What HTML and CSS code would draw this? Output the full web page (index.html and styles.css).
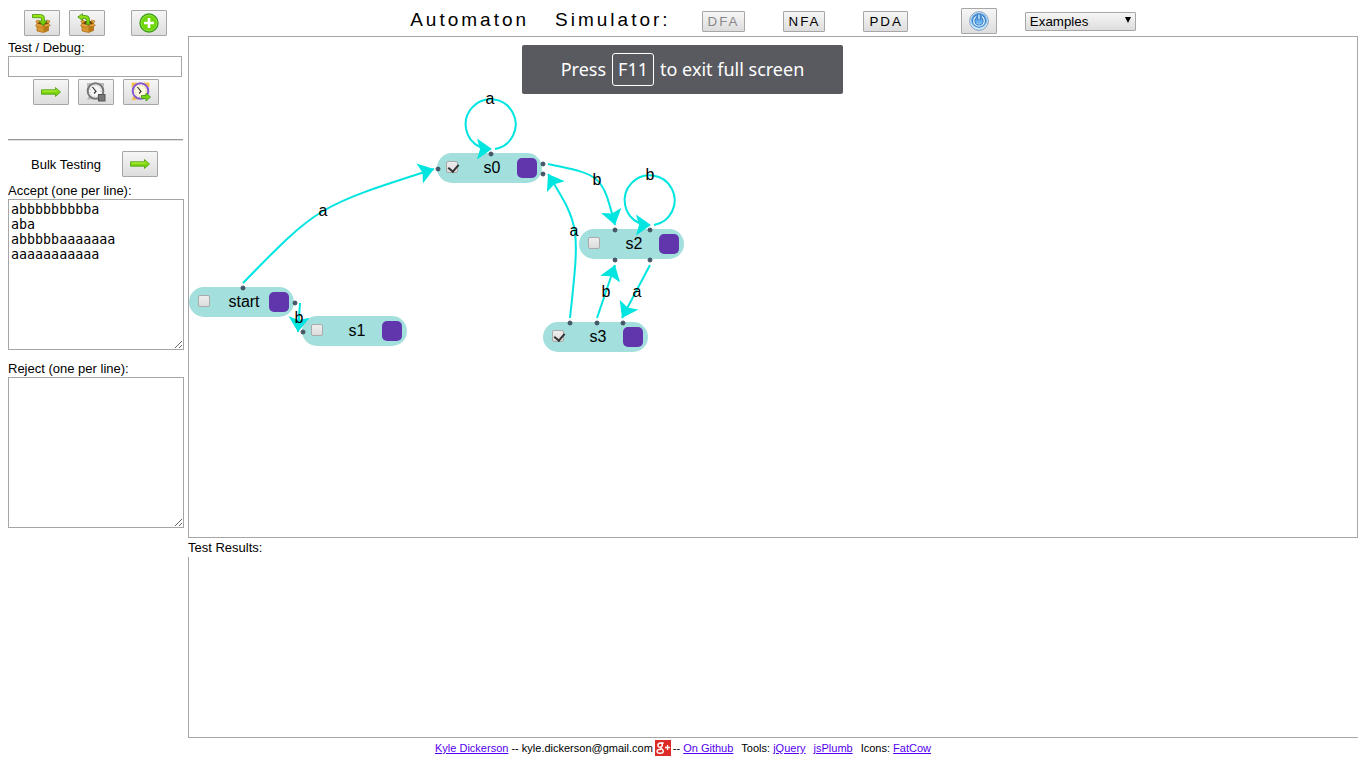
FILE: index.html
```html
<!DOCTYPE html>
<html lang="en">
<head>
<meta charset="utf-8">
<title>Automaton Simulator</title>
<link rel="stylesheet" href="styles.css">
</head>
<body>
<svg class="defs" aria-hidden="true">
  <defs>
    <linearGradient id="green" x1="0" y1="0" x2="0" y2="1"><stop offset="0" stop-color="#a4e81c"/><stop offset="1" stop-color="#62c800"/></linearGradient>
    <linearGradient id="blue" x1="0" y1="0" x2="0" y2="1"><stop offset="0" stop-color="#4b8fd6"/><stop offset="0.5" stop-color="#62acec"/><stop offset="1" stop-color="#c5ecff"/></linearGradient>
    <symbol id="box" viewBox="0 0 20 20">
      <path d="M5 10.500h11.500v7l-5 2L5 18z" fill="#d9982f" stroke="#a8690f" stroke-width=".7"/>
      <path d="M11.500 12.500l5-2v7l-5 2z" fill="#b97818"/>
      <path d="M5 10.500L8 8h6.500l2 2.500-5 2z" fill="#6b3f08"/>
      <path d="M5 10.500l6.500 1.500-1.500 2.500-6.500-1.500zM16.500 10.500l-5 1.500 2 2 5-1.500zM5 10.500L3.800 8 6.500 7 8 8.500zM16.500 10.500L18 8l-3.200-1-.8 1.500z" fill="#e2a542" stroke="#a8690f" stroke-width=".6"/>
    </symbol>
    <symbol id="arrow" viewBox="0 0 20 20">
      <path d="M.5 7.800h14V5.500l5 4.500-5 4.500v-2.300H.5z" fill="url(#green)" stroke="#55a51c" stroke-width=".9"/>
      <path d="M1.500 9h13.500" stroke="#b8f04a" stroke-width=".8"/>
    </symbol>
    <marker id="head" viewBox="-15 -11 15 22" refX="0" refY="0" markerWidth="15" markerHeight="22" markerUnits="userSpaceOnUse" orient="auto">
      <path d="M0 0L-15-10.500L-12 0L-15 10.500z" fill="#00e5e0"/>
    </marker>
  </defs>
</svg>
<div class="page">
  <div class="workspace">
    <aside class="sidebar">
      <div class="tools file-tools">
        <button class="icon-button" type="button" aria-label="Save"><svg viewBox="0 0 20 20"><use href="#box"/><path d="M.5 1.500h8q4 0 4 4V8h2.500L11 12.500 7 8h2.500V6q0-1.300-1.300-1.300H.5z" fill="url(#green)" stroke="#4d9b18" stroke-width=".9"/></svg></button>
        <button class="icon-button" type="button" aria-label="Load"><svg viewBox="0 0 20 20"><use href="#box"/><path d="M12.500 11.500V6.500q0-4-4-4H5.500V.7L.8 4 5.500 7.300V5.500h2Q9.500 5.500 9.500 7.500v4z" fill="url(#green)" stroke="#4d9b18" stroke-width=".9"/></svg></button>
        <button class="icon-button add-button" type="button" aria-label="Add state"><svg viewBox="0 0 20 20"><circle cx="10" cy="10" r="9" fill="#6fd60c" stroke="#3b9d1a" stroke-width="1.400"/><circle cx="10" cy="10" r="7.900" fill="none" stroke="#a2ea4a" stroke-width=".7"/><path d="M8.700 5h2.600v3.700H15v2.600h-3.700V15H8.700v-3.700H5V8.700h3.700z" fill="#fff"/></svg></button>
      </div>
      <label class="caption" for="test">Test / Debug:</label>
      <input class="test-input" id="test" type="text">
      <div class="tools run-tools">
        <button class="icon-button" type="button" aria-label="Test"><svg><use href="#arrow"/></svg></button>
        <button class="icon-button" type="button" aria-label="Stop debugging"><svg viewBox="0 0 20 20"><path d="M1 5V1h5zM18 5V1h-5zM1 18l2-4 3 3z" fill="#bbb"/><circle cx="9.500" cy="9" r="7.800" fill="#f7f7f7" stroke="#777" stroke-width="2"/><circle cx="9.500" cy="9" r="5.500" fill="none" stroke="#aaa" stroke-dasharray="1 2"/><path d="M6.500 5l3.500 4.500-2 2" fill="none" stroke="#333" stroke-width="1.200"/><rect x="12.500" y="12.500" width="6.500" height="6.500" fill="#777" stroke="#555"/></svg></button>
        <button class="icon-button" type="button" aria-label="Step"><svg viewBox="0 0 20 20"><path d="M1 5V1h5zM18 5V1h-5zM1 18l2-4 3 3z" fill="#f5b93a" stroke="#f5c65a"/><circle cx="9.500" cy="9" r="7.800" fill="#fffadf" stroke="#8557d0" stroke-width="2"/><circle cx="9.500" cy="9" r="5.500" fill="none" stroke="#c8b980" stroke-dasharray="1 2"/><path d="M6.500 5l3.500 4.500-2 2" fill="none" stroke="#333" stroke-width="1.200"/><path d="M10.500 13.500h4.500v-2.500l4.500 4-4.500 4v-2.500h-4.500z" fill="#76d60c" stroke="#469b18" stroke-width=".9"/></svg></button>
      </div>
      <hr class="rule">
      <div class="bulk">
        <span>Bulk Testing</span>
        <button class="icon-button" type="button" aria-label="Run bulk tests"><svg><use href="#arrow"/></svg></button>
      </div>
      <label class="caption" for="accept">Accept (one per line):</label>
      <textarea class="strings" id="accept" spellcheck="false">abbbbbbbbba
aba
abbbbbaaaaaaa
aaaaaaaaaaa</textarea>
      <label class="caption reject-caption" for="reject">Reject (one per line):</label>
      <textarea class="strings" id="reject" spellcheck="false"></textarea>
    </aside>
    <main class="main">
      <header class="header">
        <h1 class="title"><span>Automaton</span> <span>Simulator:</span></h1>
        <div class="modes">
          <button class="mode" type="button" disabled>DFA</button>
          <button class="mode" type="button">NFA</button>
          <button class="mode" type="button">PDA</button>
        </div>
        <button class="icon-button power" type="button" aria-label="Reset"><svg viewBox="0 0 20 20"><circle cx="10" cy="10" r="9.300" fill="#eaf6ff" stroke="#7398be" stroke-width="1"/><circle cx="10" cy="10" r="8" fill="url(#blue)"/><path d="M7 5.500a5.300 5.300 0 1 0 6 0M10 3v6" fill="none" stroke="#2d6fb8" stroke-width="3"/><path d="M7 5.500a5.300 5.300 0 1 0 6 0M10 3.500v5" fill="none" stroke="#d9f1ff" stroke-width="1.400"/></svg></button>
        <div class="examples-wrap">
          <select class="examples" aria-label="Examples"><option>Examples</option></select>
          <span class="caret" aria-hidden="true"></span>
        </div>
      </header>
      <section class="canvas" aria-label="Automaton">
        <div class="node n-start"><input type="checkbox" aria-label="start accepts"><span class="name">start</span><span class="handle"></span></div>
        <div class="node n-s0"><input type="checkbox" aria-label="s0 accepts" checked><span class="name">s0</span><span class="handle"></span></div>
        <div class="node n-s1"><input type="checkbox" aria-label="s1 accepts"><span class="name">s1</span><span class="handle"></span></div>
        <div class="node n-s2"><input type="checkbox" aria-label="s2 accepts"><span class="name">s2</span><span class="handle"></span></div>
        <div class="node n-s3"><input type="checkbox" aria-label="s3 accepts" checked><span class="name">s3</span><span class="handle"></span></div>
        <svg class="edges" viewBox="189 37 600 400" width="600" height="400">
          <g class="lines">
            <path d="M243 283C318 206 318 206 434 169"/>
            <path d="M300 303L298 332"/>
            <path d="M495 149A25 25 0 1 0 480 147" class="loop"/>
            <path d="M478 149H492" class="tip"/>
            <path d="M548 164C602 175 602 175 615 225"/>
            <path d="M654 225A25 25 0 1 0 639 223" class="loop"/>
            <path d="M637 225H651" class="tip"/>
            <path d="M570 318C580 226 580 226 548 174"/>
            <path d="M597 318L615 265"/>
            <path d="M650 265L622 318"/>
          </g>
          <g class="dots">
            <circle cx="243" cy="288" r="2"/><circle cx="295" cy="303" r="2"/><circle cx="303" cy="332" r="2"/>
            <circle cx="438" cy="169" r="2"/><circle cx="491" cy="154" r="2"/><circle cx="543" cy="164" r="2"/><circle cx="543" cy="174" r="2"/>
            <circle cx="615" cy="230" r="2"/><circle cx="650" cy="230" r="2"/><circle cx="615" cy="260" r="2"/><circle cx="650" cy="260" r="2"/>
            <circle cx="570" cy="323" r="2"/><circle cx="597" cy="323" r="2"/><circle cx="623" cy="323" r="2"/>
          </g>
          <g class="labels">
            <text x="323" y="216">a</text><text x="299" y="323">b</text><text x="490" y="104">a</text>
            <text x="597" y="185">b</text><text x="650" y="180">b</text><text x="574" y="236">a</text>
            <text x="606" y="297">b</text><text x="637" y="297">a</text>
          </g>
        </svg>
        <div class="toast" role="status">Press <kbd class="key">F11</kbd> to exit full screen</div>
      </section>
      <h2 class="results-title">Test Results:</h2>
      <section class="results" aria-label="Test Results"></section>
    </main>
  </div>
  <footer class="footer">
    <span><a href="#kyle">Kyle Dickerson</a> -- kyle.dickerson@gmail.com</span>
    <a class="gplus" href="#plus" aria-label="Google Plus"><svg viewBox="0 0 16 16"><rect width="16" height="16" fill="#dd2c27"/><path d="M8.800 3H5.800C1.800 3 2.200 7.500 5.300 7.200c2.900-.3 2.400-4.200.3-4.200M6 7.300c-1.200 1.200 2.300 1.700 2.300 3.900 0 2.800-6.200 2.700-6.200.2 0-1.700 2-2.100 4-2.100" fill="none" stroke="#fff" stroke-width="1.400"/><path d="M12.500 5v5M10 7.500h5" stroke="#fff" stroke-width="1.300"/></svg></a>
    <span>-- <a href="#github">On Github</a></span>
    <span class="credit">Tools: <a href="#jquery">jQuery</a></span>
    <a class="credit" href="#jsplumb">jsPlumb</a>
    <span class="credit">Icons: <a href="#fatcow">FatCow</a></span>
  </footer>
</div>
</body>
</html>
```

FILE: styles.css
```css
* { box-sizing: border-box; }

body {
  margin: 0;
  background: #fff;
  color: #000;
  font: 13px/15px "Liberation Sans", Arial, sans-serif;
}

button, input, select { font-family: inherit; color: inherit; }

.defs { position: absolute; width: 0; height: 0; }

.page {
  display: flex;
  flex-direction: column;
  min-height: 100vh;
  padding: 0 8px;
}

.workspace {
  display: grid;
  grid-template-columns: 180px minmax(0, 1fr);
  flex: 1;
}

.sidebar {
  display: flex;
  flex-direction: column;
  align-items: flex-start;
  padding-top: 10px;
}

.tools { display: flex; gap: 9px; }
.file-tools { padding-left: 16px; }
.add-button { margin-left: 17px; }
.run-tools { padding: 2px 0 0 25px; }

.icon-button, .mode, .examples {
  border: 1px solid #a6a6a6;
  border-radius: 1px;
  background: linear-gradient(#f6f6f6, #dddddd);
}

.icon-button {
  display: flex;
  align-items: center;
  justify-content: center;
  width: 36px;
  height: 26px;
  padding: 0;
}

.icon-button svg { width: 20px; height: 20px; }

.caption { display: block; padding: 4px 0 1px; }

.test-input {
  width: 174px;
  height: 21px;
  padding: 1px 2px;
  border: 1px solid #a6a6a6;
}

.rule {
  width: 175px;
  height: 2px;
  margin: 34px 0 10px;
  border: 0;
  border-top: 1px solid #999;
  border-bottom: 1px solid #ddd;
}

.bulk {
  display: flex;
  align-items: center;
  gap: 21px;
  padding: 0 0 2px 23px;
}

.strings {
  width: 176px;
  height: 151px;
  padding: 2px;
  border: 1px solid #a6a6a6;
  color: #000;
  font-family: "DejaVu Sans Mono", monospace;
  line-height: 15px;
  resize: both;
}

.reject-caption { padding-top: 11px; }

.main { display: flex; flex-direction: column; }

.header {
  display: flex;
  align-items: center;
  justify-content: center;
  min-height: 36px;
  padding-top: 6px;
}

.title {
  display: flex;
  gap: 26px;
  margin: 0 31px 2px 0;
  font-size: 19px;
  line-height: 22px;
  font-weight: 400;
  letter-spacing: 3px;
}

.modes { display: flex; gap: 38px; }

.mode {
  height: 21px;
  padding: 0 4px 0 5px;
  letter-spacing: 2px;
}

.mode:disabled { color: #888; }
.power { margin: 0 28px 0 53px; }

.examples-wrap { position: relative; }

.examples {
  display: block;
  width: 111px;
  height: 19px;
  padding: 0 4px;
  appearance: none;
}

.caret {
  position: absolute;
  top: 5px;
  right: 5px;
  border: 3px solid transparent;
  border-top: 6px solid #000;
  border-bottom: 0;
  pointer-events: none;
}

.canvas {
  position: relative;
  flex: 1;
  min-height: 340px;
  border: 1px solid #a6a6a6;
}

.edges { position: absolute; top: 0; left: 0; pointer-events: none; }
.lines { fill: none; stroke: #00e5e0; stroke-width: 2; }
.lines path { marker-end: url(#head); }
.lines .loop { marker-end: none; }
.lines .tip { stroke: none; }
.dots { fill: #456; stroke: #456; }
.labels { font-size: 16px; text-anchor: middle; }

.node {
  position: absolute;
  display: grid;
  grid-template-columns: 12px 1fr 20px;
  align-items: center;
  width: 105px;
  height: 30px;
  padding: 0 5px 0 9px;
  border-radius: 15px;
  background: #a2dfdd;
  font-size: 16px;
}

.n-start { left: 0; top: 250px; }
.n-s0 { left: 248px; top: 116px; }
.n-s1 { left: 113px; top: 279px; }
.n-s2 { left: 390px; top: 192px; }
.n-s3 { left: 354px; top: 285px; }

.node input {
  width: 12px;
  height: 12px;
  margin: 0 0 2px;
  border: 1px solid #aaa;
  border-radius: 2px;
  background: linear-gradient(#eee, #dcdcdc);
  appearance: none;
}

.node input:checked::after {
  content: "";
  display: block;
  width: 5px;
  height: 8px;
  margin-left: 3px;
  border: solid #333;
  border-width: 0 2px 2px 0;
  transform: rotate(40deg);
}

.name { padding: 0 0 2px 9px; text-align: center; }
.handle { height: 20px; border-radius: 5px; background: #6136ad; }

.toast {
  position: absolute;
  top: 8px;
  left: 50%;
  display: flex;
  align-items: center;
  justify-content: center;
  gap: 6px;
  width: 321px;
  height: 49px;
  margin-left: -251px;
  border-radius: 2px;
  background: #595a5f;
  color: #fff;
  font: 18px/23px "Noto Sans", "Open Sans", sans-serif;
  white-space: nowrap;
}

.key {
  padding: 4px 5px;
  border: 1px solid #fff;
  border-radius: 3px;
  font: inherit;
}

.results-title {
  margin: 0;
  padding: 2px 0;
  font-size: 13px;
  line-height: 15px;
  font-weight: 400;
}

.results {
  min-height: 181px;
  border: solid #a6a6a6;
  border-width: 0 0 1px 1px;
}

.footer {
  display: flex;
  align-items: center;
  justify-content: center;
  gap: 2px;
  padding: 2px 0 12px;
  font-size: 11px;
  line-height: 14px;
}

.footer a { color: #5500ee; }
.gplus svg { display: block; width: 16px; height: 16px; }
.credit { margin-left: 6px; }
```
